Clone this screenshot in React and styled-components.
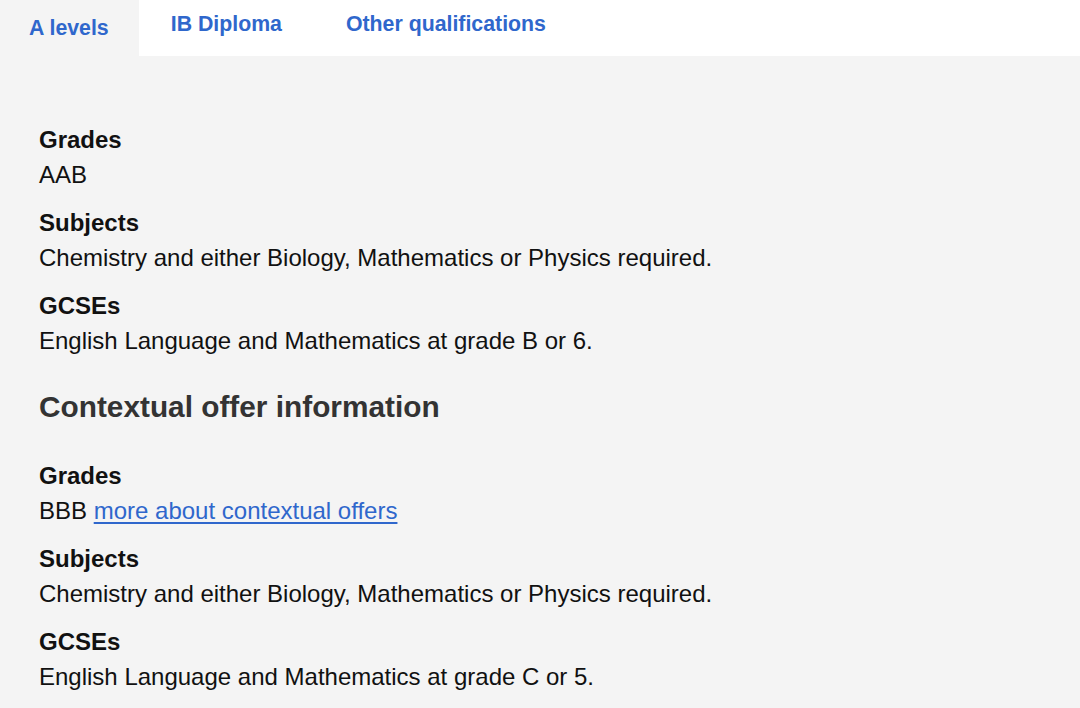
import React from "react";
import styled, { createGlobalStyle } from "styled-components";

const GlobalStyle = createGlobalStyle`
  html, body {
    margin: 0;
    padding: 0;
    background: #f4f4f4;
    font-family: "Liberation Sans", Arial, Helvetica, sans-serif;
    color: #111;
  }
`;

const offer = [
  { label: "Grades", value: "AAB" },
  {
    label: "Subjects",
    value: "Chemistry and either Biology, Mathematics or Physics required.",
  },
  { label: "GCSEs", value: "English Language and Mathematics at grade B or 6." },
];

const contextual = [
  { label: "Grades", value: "BBB", link: "more about contextual offers" },
  {
    label: "Subjects",
    value: "Chemistry and either Biology, Mathematics or Physics required.",
  },
  { label: "GCSEs", value: "English Language and Mathematics at grade C or 5." },
];

const tabs = ["A levels", "IB Diploma", "Other qualifications"];

function App() {
  return (
    <Page>
      <GlobalStyle />
      <TabBar>
        {tabs.map((t, i) => (
          <Tab key={t} active={i === 0}>
            {t}
          </Tab>
        ))}
      </TabBar>
      <Content>
        <List>
          {offer.map((row) => (
            <Item key={row.label}>
              <Label>{row.label}</Label>
              <Value>{row.value}</Value>
            </Item>
          ))}
        </List>
        <Heading>Contextual offer information</Heading>
        <List>
          {contextual.map((row) => (
            <Item key={row.label}>
              <Label>{row.label}</Label>
              <Value>
                {row.value}
                {row.link && (
                  <>
                    {" "}
                    <Link href="#">{row.link}</Link>
                  </>
                )}
              </Value>
            </Item>
          ))}
        </List>
      </Content>
    </Page>
  );
}

export default App;

const Page = styled.div`
  width: 100%;
  min-height: 708px;
  background: #f4f4f4;
`;

const TabBar = styled.div`
  display: flex;
  height: 56px;
  background: #ffffff;
`;

const Tab = styled.div`
  display: flex;
  align-items: center;
  padding: ${(p) => (p.active ? "0 30px 0 29px" : "0 32px 8px 32px")};
  background: ${(p) => (p.active ? "#f4f4f4" : "#ffffff")};
  color: #2f67cc;
  font-size: 21.3px;
  font-weight: 700;
  cursor: pointer;
`;

const Content = styled.div`
  padding: 66px 39px 20px;
`;

const List = styled.dl`
  margin: 0;
`;

const Item = styled.div`
  margin-bottom: 12px;
`;

const Label = styled.dt`
  font-size: 24px;
  font-weight: 700;
  line-height: 35px;
  color: #111;
`;

const Value = styled.dd`
  margin: 0;
  font-size: 24px;
  line-height: 36px;
  color: #111;
`;

const Heading = styled.h2`
  margin: 28px 0 31px;
  font-size: 29.8px;
  font-weight: 700;
  line-height: 40px;
  color: #333;
`;

const Link = styled.a`
  color: #2f67cc;
  text-decoration: underline;
  text-underline-offset: 3px;
`;
